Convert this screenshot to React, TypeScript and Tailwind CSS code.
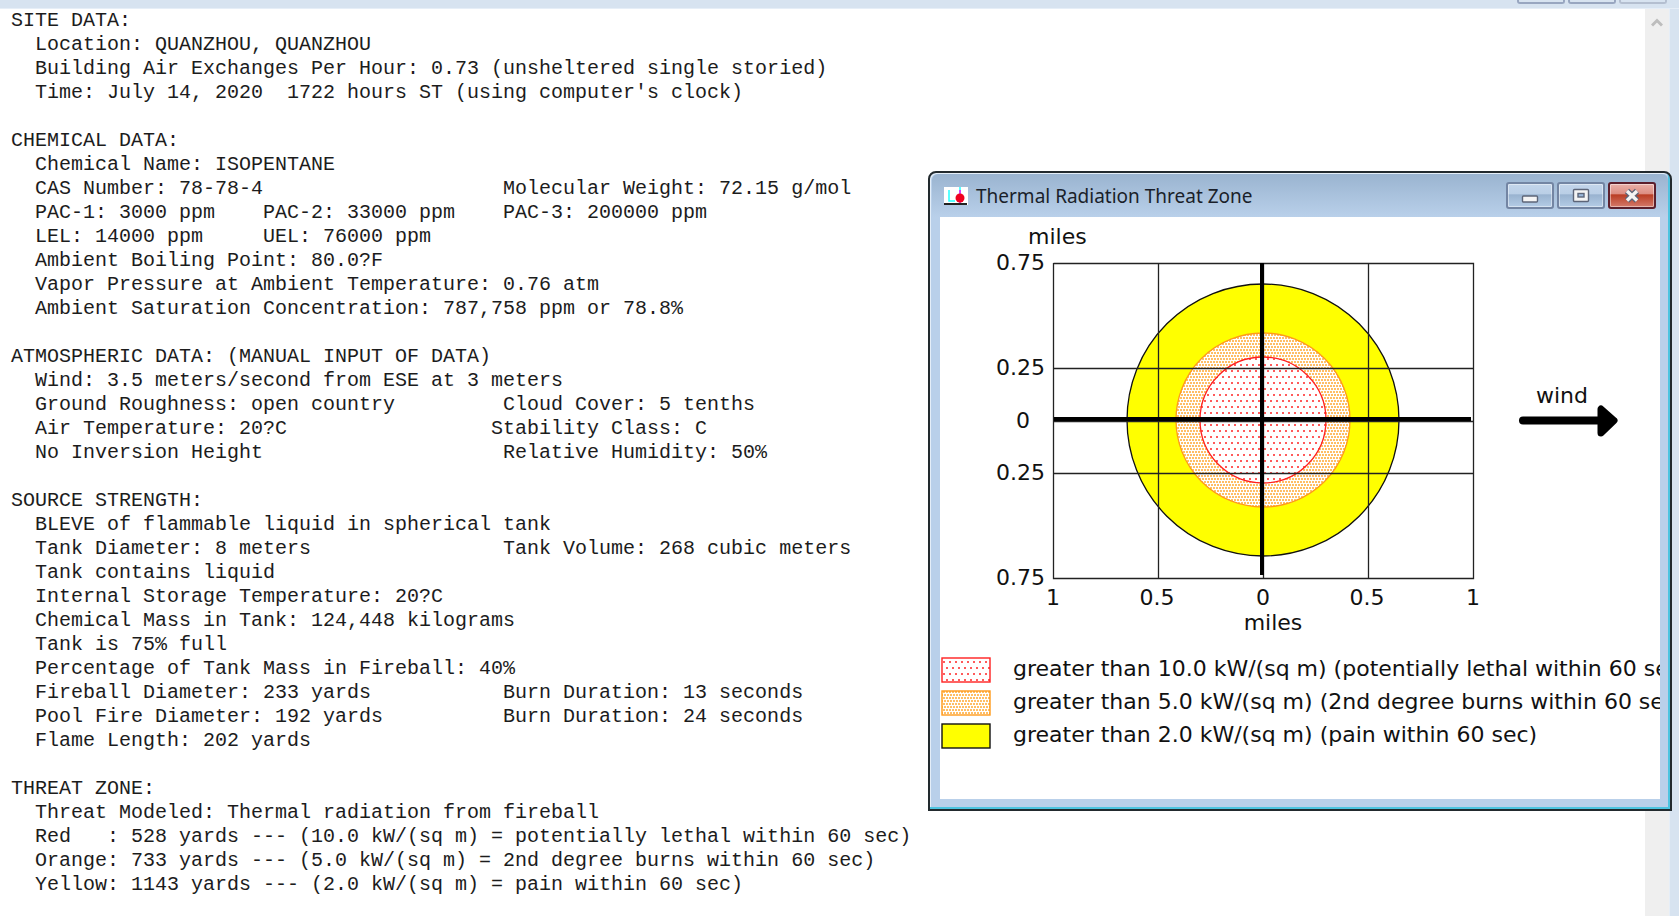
const report = `SITE DATA:
  Location: QUANZHOU, QUANZHOU
  Building Air Exchanges Per Hour: 0.73 (unsheltered single storied)
  Time: July 14, 2020  1722 hours ST (using computer's clock)

CHEMICAL DATA:
  Chemical Name: ISOPENTANE
  CAS Number: 78-78-4                    Molecular Weight: 72.15 g/mol
  PAC-1: 3000 ppm    PAC-2: 33000 ppm    PAC-3: 200000 ppm
  LEL: 14000 ppm     UEL: 76000 ppm
  Ambient Boiling Point: 80.0?F
  Vapor Pressure at Ambient Temperature: 0.76 atm
  Ambient Saturation Concentration: 787,758 ppm or 78.8%

ATMOSPHERIC DATA: (MANUAL INPUT OF DATA)
  Wind: 3.5 meters/second from ESE at 3 meters
  Ground Roughness: open country         Cloud Cover: 5 tenths
  Air Temperature: 20?C                 Stability Class: C
  No Inversion Height                    Relative Humidity: 50%

SOURCE STRENGTH:
  BLEVE of flammable liquid in spherical tank
  Tank Diameter: 8 meters                Tank Volume: 268 cubic meters
  Tank contains liquid
  Internal Storage Temperature: 20?C
  Chemical Mass in Tank: 124,448 kilograms
  Tank is 75% full
  Percentage of Tank Mass in Fireball: 40%
  Fireball Diameter: 233 yards           Burn Duration: 13 seconds
  Pool Fire Diameter: 192 yards          Burn Duration: 24 seconds
  Flame Length: 202 yards

THREAT ZONE:
  Threat Modeled: Thermal radiation from fireball
  Red   : 528 yards --- (10.0 kW/(sq m) = potentially lethal within 60 sec)
  Orange: 733 yards --- (5.0 kW/(sq m) = 2nd degree burns within 60 sec)
  Yellow: 1143 yards --- (2.0 kW/(sq m) = pain within 60 sec)`;

const legend = [
  { fill: 'url(#dots-red)', stroke: '#ff2020', label: 'greater than 10.0 kW/(sq m) (potentially lethal within 60 sec)' },
  { fill: 'url(#dots-orange)', stroke: '#ff9a1a', label: 'greater than 5.0 kW/(sq m) (2nd degree burns within 60 sec)' },
  { fill: '#ffff00', stroke: '#111111', label: 'greater than 2.0 kW/(sq m) (pain within 60 sec)' },
];

const yLabels = [
  { y: 53, text: '0.75' },
  { y: 158, text: '0.25' },
  { y: 211, text: '0' },
  { y: 263, text: '0.25' },
  { y: 368, text: '0.75' },
];

const xLabels = [
  { x: 113, text: '1' },
  { x: 217, text: '0.5' },
  { x: 323, text: '0' },
  { x: 427, text: '0.5' },
  { x: 533, text: '1' },
];

function AppIcon() {
  return (
    <svg width="24" height="18" viewBox="0 0 24 18" aria-hidden="true">
      <rect width="24" height="18" fill="#fff" />
      <path d="M5 3v11h6M16 0v17" stroke="#2ff" strokeWidth="1.5" fill="none" />
      <path d="M16 3v13" stroke="#f0f" strokeWidth="1.5" />
      <circle cx="16" cy="11" r="4.5" fill="#f00020" />
      <path d="M0 17h23" stroke="#222" strokeWidth="2" />
    </svg>
  );
}

function CaptionButton({ kind }: { kind: 'Minimize' | 'Maximize' | 'Close' }) {
  const color =
    kind === 'Close'
      ? 'border-[#5c1f2c] bg-[linear-gradient(#eab0a8_0,#dc8c80_45%,#b93c22_46%,#d4796a_100%)]'
      : 'border-[#7385a3] bg-[linear-gradient(#c3d5ea_0,#b9cee6_45%,#98b2cf_46%,#b4cce6_100%)]';
  return (
    <button
      type="button"
      aria-label={kind}
      className={`flex h-[27px] w-12 items-center justify-center rounded-[3px] border-2 shadow-[inset_0_0_0_1px_rgba(255,255,255,0.45)] ${color}`}
    >
      <svg width="18" height="16" viewBox="0 0 18 16" aria-hidden="true">
        {kind === 'Minimize' && (
          <rect x="1.5" y="8" width="15" height="6" rx="1" fill="#f4f4f4" stroke="#5d6578" strokeWidth="1.4" />
        )}
        {kind === 'Maximize' && (
          <>
            <rect x="1.5" y="1.5" width="15" height="12" rx="1" fill="#f4f4f4" stroke="#5d6578" strokeWidth="1.4" />
            <rect x="6" y="5.5" width="6" height="3.5" fill="#9cb9dc" stroke="#5d6578" strokeWidth="1.4" />
          </>
        )}
        {kind === 'Close' && (
          <>
            <path d="M4 3l10 9.500M14 3L4 12.500" stroke="#5d6578" strokeWidth="6" />
            <path d="M4 3l10 9.500M14 3L4 12.500" stroke="#f4f4f4" strokeWidth="3.400" />
          </>
        )}
      </svg>
    </button>
  );
}

function ThreatChart() {
  return (
    <svg width="720" height="425" viewBox="0 0 720 425" className="block shrink-0 font-['DejaVu_Sans',sans-serif] text-[22px]" fill="#111">
      <defs>
        <pattern id="dots-red" width="6" height="12" patternUnits="userSpaceOnUse">
          <rect width="6" height="12" fill="#fff" />
          <path d="M0 3h2v2h-2zM3 9h2v2h-2z" fill="#ff5a5a" />
        </pattern>
        <pattern id="dots-orange" width="3" height="6" patternUnits="userSpaceOnUse">
          <rect width="3" height="6" fill="#fff" />
          <path d="M0 0h2v2h-2zM1 3h2v2h-2z" fill="#ffbe66" />
        </pattern>
      </defs>

      <circle cx="323" cy="203" r="136" fill="#ffff00" stroke="#111" strokeWidth="1.300" />
      <circle cx="323" cy="203" r="87" fill="url(#dots-orange)" stroke="#ff9a1a" strokeWidth="1.300" />
      <circle cx="323" cy="203" r="63" fill="url(#dots-red)" stroke="#ff2020" strokeWidth="1.300" />

      <path
        d="M113.500 46v315.500h420V46.500h-420M218.500 46v315M323.500 46v315M428.500 46v315M113 151.500h420M113 204.500h420M113 256.500h420"
        fill="none"
        stroke="#222"
        strokeWidth="1.300"
      />
      <path d="M322 46v312M114 202h417" fill="none" stroke="#000" strokeWidth="4" />

      <text x="88" y="27">miles</text>
      {yLabels.map(l => (
        <text key={l.y} x={l.text === '0' ? 90 : 105} y={l.y} textAnchor="end">{l.text}</text>
      ))}
      {xLabels.map(l => (
        <text key={l.x} x={l.x} y="388" textAnchor="middle">{l.text}</text>
      ))}
      <text x="333" y="413" textAnchor="middle">miles</text>

      <text x="596" y="186">wind</text>
      <path d="M583 203.500h80" stroke="#000" strokeWidth="8" strokeLinecap="round" />
      <path d="M661 192v24l13-12.500z" stroke="#000" strokeWidth="7" strokeLinejoin="round" fill="#000" />
    </svg>
  );
}

function ThreatWindow() {
  return (
    <section
      aria-label="Thermal Radiation Threat Zone"
      className="absolute top-[171px] right-[7px] flex h-[640px] w-[744px] flex-col rounded-t-lg border-2 border-[#222a2e] bg-[#b9d0ea] px-2.5 pb-2.5 shadow-[inset_-2px_-2px_0_#4cc4e0,inset_1px_1px_0_#e4eef8]"
    >
      <header className="-mx-2 mt-px flex h-[43px] shrink-0 items-center rounded-t-md bg-linear-to-b from-[#9ab4d0] to-[#b9d0ea] pr-3 pl-3">
        <AppIcon />
        <h1 className="ml-2 grow font-['Noto_Sans',sans-serif] text-[19px] leading-6 text-[#1a1f2a]">
          Thermal Radiation Threat Zone
        </h1>
        <div className="flex gap-[3px]">
          <CaptionButton kind="Minimize" />
          <CaptionButton kind="Maximize" />
          <CaptionButton kind="Close" />
        </div>
      </header>
      <div className="flex grow flex-col overflow-hidden bg-white">
        <ThreatChart />
        <ul className="mt-2.5 font-['DejaVu_Sans',sans-serif] text-[22px] leading-[33px] whitespace-nowrap text-[#111]">
          {legend.map(item => (
            <li key={item.label} className="flex gap-[22px]">
              <svg width="51" height="33" viewBox="0 0 51 33" className="shrink-0" aria-hidden="true">
                <rect x="2" y="6" width="48" height="24" fill={item.fill} stroke={item.stroke} strokeWidth="1.400" />
              </svg>
              {item.label}
            </li>
          ))}
        </ul>
      </div>
    </section>
  );
}

export default function App() {
  return (
    <main className="relative flex min-h-screen flex-col overflow-hidden bg-white">
      <header className="flex h-[9px] shrink-0 items-start justify-end gap-[3px] overflow-hidden border-b border-[#e6eef7] bg-[#d7e3f0] pr-3">
        <button type="button" aria-label="Minimize report" className="h-1 w-12 rounded-b-[3px] border-2 border-t-0 border-[#98a6c0]" />
        <button type="button" aria-label="Maximize report" className="h-1 w-12 rounded-b-[3px] border-2 border-t-0 border-[#98a6c0]" />
        <button type="button" aria-label="Close report" className="h-1 w-12 rounded-b-[3px] border-2 border-t-0 border-[#b4bfd0]" />
      </header>
      <div className="flex grow">
        <pre className="grow pl-[11px] font-['Liberation_Mono',monospace] text-[20px] leading-6 text-[#1c1c1c]">{report}</pre>
        <div className="flex w-6 flex-col items-center bg-[#efefef] pt-2">
          <button type="button" aria-label="Scroll up">
            <svg width="12" height="11" viewBox="0 0 12 11" aria-hidden="true">
              <path d="M1 8.500l5-5 5 5" fill="none" stroke="#bdbdbd" strokeWidth="3" />
            </svg>
          </button>
        </div>
        <div className="w-2.5 border-l border-[#e6eef7] bg-[#d7e3f0]" />
      </div>
      <ThreatWindow />
    </main>
  );
}
